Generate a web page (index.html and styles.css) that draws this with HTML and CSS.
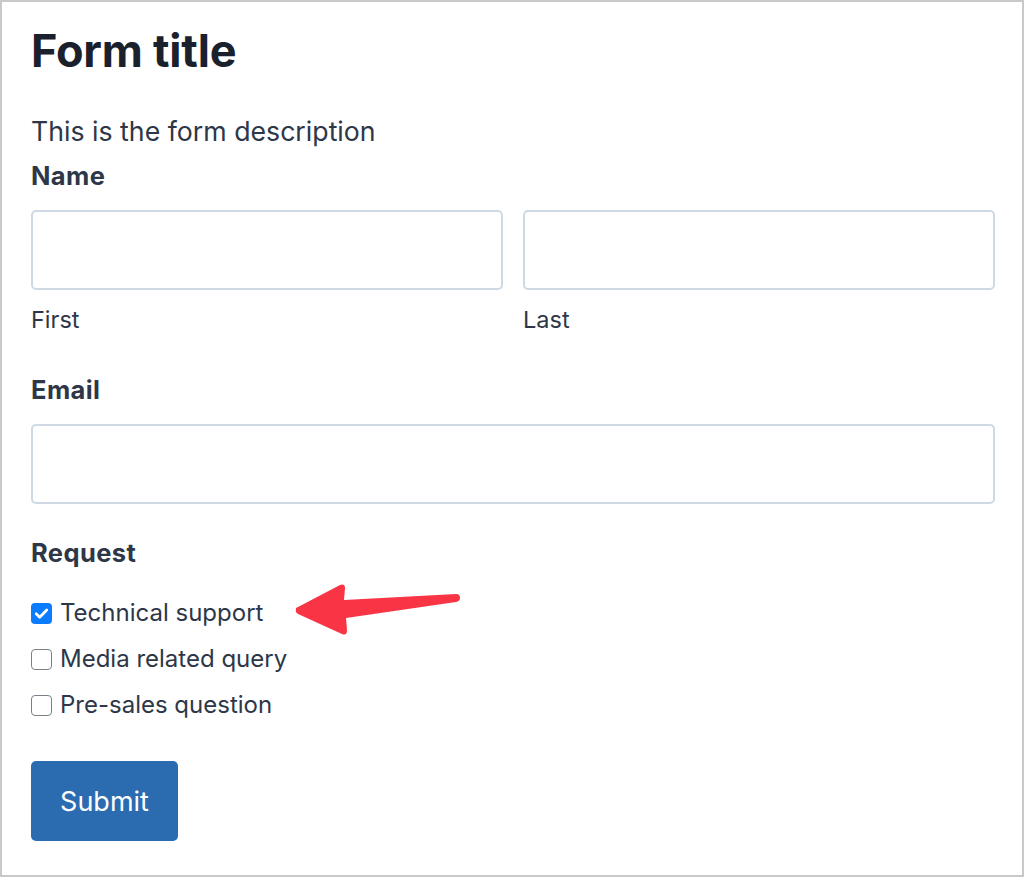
FILE: index.html
```html
<!DOCTYPE html>
<html lang="en">
<head>
  <meta charset="UTF-8" />
  <meta name="viewport" content="width=device-width, initial-scale=1.0" />
  <title>Form title</title>
  <link rel="stylesheet" href="styles.css">
</head>
<body>
  <div class="frame">
    <form class="form">
      <h1 class="form-title">Form title</h1>
      <p class="form-desc">This is the form description</p>

      <div class="field">
        <div class="label">Name</div>
        <div class="name-row">
          <div class="name-part">
            <input type="text" class="input" />
            <div class="sublabel">First</div>
          </div>
          <div class="name-part">
            <input type="text" class="input" />
            <div class="sublabel">Last</div>
          </div>
        </div>
      </div>

      <div class="field">
        <div class="label">Email</div>
        <input type="email" class="input" />
      </div>

      <div class="field">
        <div class="label">Request</div>
        <div class="choices">
          <label class="choice"><span class="box checked"><svg viewBox="0 0 21 21" width="21" height="21"><path d="M5.2 10.8l3.5 3.5L15.8 7" fill="none" stroke="#fff" stroke-width="2.7" stroke-linecap="round" stroke-linejoin="round"/></svg></span>Technical support</label>
          <label class="choice"><span class="box"></span>Media related query</label>
          <label class="choice"><span class="box"></span>Pre-sales question</label>
        </div>
      </div>

      <button type="button" class="submit">Submit</button>
    </form>

    <svg class="arrow" width="170" height="56" viewBox="0 0 170 56">
      <path d="M4 27 Q3 25 6 24 L48 2 Q53 0 53 5 L52 17 L164 11 Q168 11 168 15 Q168 18 164 19 L54 35 L55 47 Q55 53 50 51 L6 31 Q3 29 4 27 Z" fill="#f93545"/>
    </svg>
  </div>
</body>
</html>
```

FILE: styles.css
```css
html, body {
  margin: 0;
  padding: 0;
}
body {
  font-family: Inter, "Noto Sans", sans-serif;
  color: #2d3748;
  background: #fff;
}
.frame {
  position: relative;
  box-sizing: border-box;
  width: 1024px;
  height: 877px;
  border: 2px solid #c9c9c9;
  padding: 0 27px 0 29px;
}
.form-title {
  margin: 0;
  padding-top: 23px;
  font-size: 45px;
  line-height: 52px;
  font-weight: 700;
  color: #1a202c;
  letter-spacing: -0.2px;
}
.form-desc {
  margin: 0;
  padding-top: 37px;
  font-size: 26.7px;
  line-height: 34px;
}
.field {
  margin-bottom: 32px;
}
.label {
  font-size: 25.5px;
  font-weight: 700;
  letter-spacing: 0.4px;
  line-height: 34px;
  margin-top: 11px;
  margin-bottom: 17px;
}
.name-row {
  display: flex;
  gap: 20px;
}
.name-part {
  flex: 1;
}
.input {
  display: block;
  box-sizing: border-box;
  width: 100%;
  height: 80px;
  margin: 0;
  border: 2px solid #cfd9e4;
  border-radius: 5px;
  background: #fff;
  font-family: inherit;
  font-size: 22px;
}
.sublabel {
  font-size: 23.5px;
  line-height: 30px;
  margin-top: 15px;
  margin-bottom: 6px;
}
.choices {
  display: flex;
  flex-direction: column;
  gap: 16px;
  padding-top: 11px;
}
.choice {
  display: flex;
  align-items: center;
  font-size: 24px;
  line-height: 30px;
}
.box {
  box-sizing: border-box;
  width: 21px;
  height: 21px;
  margin-right: 8px;
  border: 1.5px solid #7c7f85;
  border-radius: 4px;
  background: #fff;
}
.box.checked {
  border: none;
  background: #0b7cfe;
}
.box svg {
  display: block;
}
.submit {
  display: block;
  margin-top: 41px;
  padding: 0;
  width: 147px;
  height: 80px;
  border: none;
  border-radius: 5px;
  background: #2b6cb0;
  color: #fff;
  font-family: inherit;
  font-size: 27px;
  font-weight: 400;
}
.arrow {
  position: absolute;
  left: 290px;
  top: 581px;
}
```
